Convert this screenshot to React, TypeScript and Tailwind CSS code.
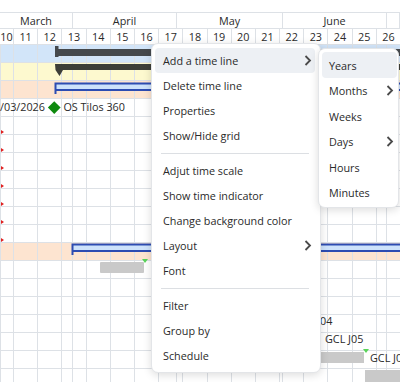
import React from "react";

const days = [10, 11, 12, 13, 14, 15, 16, 17, 18, 19, 20, 21, 22, 23, 24, 25, 26];
const months: { name: string; w: string }[] = [
  { name: "March", w: "w-[73px]" },
  { name: "April", w: "w-[104px]" },
  { name: "May", w: "w-[106px]" },
  { name: "June", w: "w-[104px]" },
  { name: "", w: "flex-1" },
];
const rowBg: Record<number, string> = {
  0: "bg-[#d2e5f9]",
  1: "bg-[#fdf9cf]",
  2: "bg-[#fde4d0]",
  11: "bg-[#fde4d0]",
};

function Chevron() {
  return (
    <svg width="8" height="11" viewBox="0 0 8 11" className="shrink-0">
      <polyline points="1.5,1 6,5.5 1.5,10" fill="none" stroke="#4a4a4a" strokeWidth="1.8" />
    </svg>
  );
}

type Item = { label: string; sub?: boolean; active?: boolean } | "sep";

const mainItems: Item[] = [
  { label: "Add a time line", sub: true, active: true },
  { label: "Delete time line" },
  { label: "Properties" },
  { label: "Show/Hide grid" },
  "sep",
  { label: "Adjut time scale" },
  { label: "Show time indicator" },
  { label: "Change background color" },
  { label: "Layout", sub: true },
  { label: "Font" },
  "sep",
  { label: "Filter" },
  { label: "Group by" },
  { label: "Schedule" },
];

const subItems: Item[] = [
  { label: "Years", active: true },
  { label: "Months", sub: true },
  { label: "Weeks" },
  { label: "Days", sub: true },
  { label: "Hours" },
  { label: "Minutes" },
];

function BlueBar({ cls }: { cls: string }) {
  return (
    <svg className={`absolute z-[2] ${cls}`} width="420" height="14" viewBox="0 0 420 14">
      <rect x="1" y="1" width="419" height="7" fill="#cde2fb" />
      <path d="M1.5 12 V1.5 H420 M2 8 H420" fill="none" stroke="#2d4cb2" strokeWidth="2" />
    </svg>
  );
}

function RedMark() {
  return (
    <div className="absolute z-[2] left-0 top-[13px] w-0 h-0 border-t-[2.5px] border-b-[2.5px] border-l-[3.5px] border-t-transparent border-b-transparent border-l-[#e02020]" />
  );
}

function GreenTick({ cls }: { cls: string }) {
  return (
    <div className={`absolute z-[2] w-0 h-0 border-l-[3px] border-r-[3px] border-t-[4px] border-l-transparent border-r-transparent border-t-[#5ad45a] ${cls}`} />
  );
}

function RowContent({ i }: { i: number }) {
  switch (i) {
    case 0:
      return (
        <svg className="absolute z-[2] left-[54px] top-[1px]" width="360" height="12" viewBox="0 0 360 12">
          <rect x="0" y="0" width="3.5" height="11" fill="#45494d" />
          <rect x="0" y="3" width="360" height="7" fill="#45494d" />
        </svg>
      );
    case 1:
      return (
        <svg className="absolute z-[2] left-[54px] top-[1px]" width="360" height="13" viewBox="0 0 360 13">
          <path d="M0 0 H360 V6 H8 L4.5 12 L0.5 6 Z" fill="#3d3e38" />
        </svg>
      );
    case 2:
      return <BlueBar cls="left-[53px] top-[1px]" />;
    case 3:
      return (
        <div className="absolute z-[2] left-[-1px] top-[1px] flex items-center h-[15px] whitespace-nowrap">
          <span>/03/2026</span>
          <span className="ml-[5px] mr-[5px] w-[8.5px] h-[8.5px] rotate-45 bg-[#0e8a0e]" />
          <span>OS Tilos 360</span>
        </div>
      );
    case 4:
    case 5:
    case 6:
    case 7:
    case 8:
    case 9:
    case 10:
      return <RedMark />;
    case 11:
      return <BlueBar cls="left-[70px] top-0" />;
    case 12:
      return (
        <>
          <div className="absolute z-[2] left-[99px] top-[1px] w-[44px] h-[11px] bg-[#c9c9c9] rounded-[1px]" />
          <GreenTick cls="left-[141px] top-[-2px]" />
        </>
      );
    case 15:
      return <div className="absolute z-[2] left-[293px] top-[-2px] leading-[15px] whitespace-nowrap">GCL J04</div>;
    case 16:
      return <div className="absolute z-[2] left-[324px] top-[-2px] leading-[15px] whitespace-nowrap">GCL J05</div>;
    case 17:
      return (
        <div className="absolute z-[2] left-[290px] top-[1px] flex items-start">
          <div className="w-[73px] h-[11px] bg-[#c9c9c9]" />
          <GreenTick cls="left-[72px] top-[-3px]" />
          <span className="ml-[6px] -mt-[2px] leading-[15px] whitespace-nowrap">GCL J06</span>
        </div>
      );
    case 18:
      return <div className="absolute z-[2] left-[364px] top-[1px] w-[60px] h-[12px] bg-[#c9c9c9]" />;
    default:
      return null;
  }
}

function Menu({
  items,
  cls,
  itemH,
  textPl,
}: {
  items: Item[];
  cls: string;
  itemH: string;
  textPl: string;
}) {
  return (
    <div
      className={`absolute z-10 bg-white border border-[#e3e5e8] rounded-[7px] shadow-[0_2px_8px_rgba(0,0,0,0.14)] ${cls}`}
    >
      {items.map((it, i) =>
        it === "sep" ? (
          <div key={i} className="h-[10px] flex items-center px-[6px]">
            <div className="h-px w-full bg-[#dcdfe3]" />
          </div>
        ) : (
          <div
            key={i}
            className={`${itemH} flex items-center justify-between ${textPl} pr-[3px] rounded-[4px] ${it.active ? "bg-[#edf0f4]" : ""}`}
          >
            <span className="whitespace-nowrap pt-[2px]">{it.label}</span>
            {it.sub && <Chevron />}
          </div>
        )
      )}
    </div>
  );
}

export default function App() {
  return (
    <div className="relative w-[400px] h-[382px] overflow-hidden bg-white font-['Open_Sans',sans-serif] text-[10.8px] text-[#2a2a2a]">
      {/* Header */}
      <div className="h-[13px] border-b border-[#dde1e6]" />
      <div className="flex h-[16px] border-b border-[#dde1e6] leading-[15px]">
        {months.map((m, i) => (
          <div key={i} className={`${m.w} shrink-0 text-center border-r border-[#dde1e6]`}>
            {m.name}
          </div>
        ))}
      </div>
      <div className="flex h-[16px] border-b border-[#dde1e6] leading-[15px]">
        {days.map((d, i) => (
          <div
            key={d}
            className={`${i === 0 ? "w-[14px]" : "w-[24.2px]"} shrink-0 flex justify-center border-r border-[#dde1e6] whitespace-nowrap`}
          >
            {d}
          </div>
        ))}
      </div>

      {/* Body */}
      <div className="relative border-l border-[#dde1e6]">
        {Array.from({ length: 19 }).map((_, i) => (
          <div key={i} className={`relative h-[18px] border-b border-[#dde1e6] ${rowBg[i] ?? ""}`}>
            <RowContent i={i} />
          </div>
        ))}
        {/* vertical grid lines (week columns and month boundaries) */}
        <div className="pointer-events-none absolute z-[1] inset-0 flex">
          {days.map((d, i) => (
            <div
              key={d}
              className={`${i === 0 ? "w-[13px]" : "w-[24.2px]"} shrink-0 border-r border-[#dde1e6]`}
            />
          ))}
        </div>
        <div className="pointer-events-none absolute z-[1] inset-0 flex">
          {months.slice(0, 4).map((m, i) => (
            <div key={i} className={`${i === 0 ? "w-[72px]" : m.w} shrink-0 border-r border-[#dde1e6]`} />
          ))}
        </div>
      </div>

      {/* Context menu and submenu (overlays) */}
      <Menu
        items={mainItems}
        cls="left-[151px] top-[43px] w-[170px] h-[330px] pt-[4px] pl-[3px] pr-[5px]"
        itemH="h-[25px]"
        textPl="pl-[8px]"
      />
      <Menu
        items={subItems}
        cls="left-[318px] top-[48px] w-[81px] h-[160px] pt-[3px] pl-[3px] pr-[1px]"
        itemH="h-[25.5px]"
        textPl="pl-[7px]"
      />
    </div>
  );
}
